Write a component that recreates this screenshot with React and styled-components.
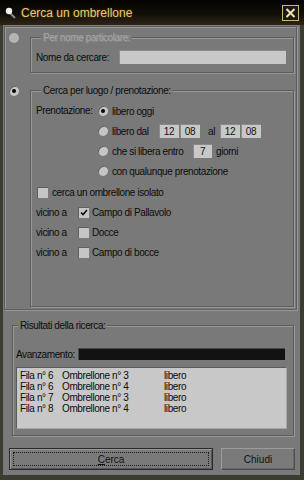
import styled, { createGlobalStyle } from "styled-components";

const GlobalStyle = createGlobalStyle`
  * { box-sizing: border-box; }
  html, body { margin: 0; padding: 0; background: #3c3d31; }
  body {
    font-family: "Liberation Sans", Arial, sans-serif;
    font-size: 10px;
    letter-spacing: -0.4px;
    color: #0c0c0c;
  }
`;

const Window = styled.div`
  width: 304px;
  height: 480px;
  display: flex;
  flex-direction: column;
  background: #3c3d31;
  overflow: hidden;
`;

const TitleBar = styled.div`
  height: 25px;
  display: flex;
  align-items: center;
  padding: 0 5px;
  background: linear-gradient(#050403 0%, #120e07 55%, #2e2616 100%);
`;

const Title = styled.span`
  flex: 1;
  margin-left: 5px;
  font-size: 12px;
  letter-spacing: 0;
  color: #e6c66c;
  text-shadow: 0 0 2px rgba(120, 90, 20, 0.8);
`;

const Body = styled.div`
  height: 450px;
  margin: 0 4px 0 3px;
  background: #797979;
  display: flex;
  flex-direction: column;
`;

const OptionsPanel = styled.div`
  margin: 1px 3px 0 1px;
  padding: 4px 2px 2px 0;
  border: 1px solid #5e5e5e;
  box-shadow: 1px 1px 0 #979797, inset 1px 1px 0 #979797;
`;

const Section = styled.div`
  display: flex;
  align-items: flex-start;
  margin-top: ${(p) => p.$gap || 0}px;
`;

const RadioColumn = styled.div`
  width: 25px;
  padding: 2px 0 0 4px;
`;

const Fieldset = styled.fieldset`
  flex: 1;
  margin: 0;
  min-width: 0;
  padding: 0 0 ${(p) => p.$bottom || 0}px ${(p) => p.$left || 5}px;
  border: 1px solid #5c5c5c;
  box-shadow: 1px 1px 0 #989898, inset 1px 1px 0 #989898;
`;

const ResultsGroup = styled(Fieldset)`
  flex: none;
  margin: 9px 6px 0 9px;
`;

const Legend = styled.legend`
  margin-left: ${(p) => p.$offset || 5}px;
  padding: 0 2px;
  line-height: 13px;
  background: #797979;
  color: ${(p) => (p.$disabled ? "#a6a6a6" : "inherit")};
  text-shadow: ${(p) => (p.$disabled ? "1px 1px 0 #8c8c8c" : "none")};
`;

const Radio = styled.span`
  position: relative;
  display: inline-block;
  flex: none;
  width: 10px;
  height: 10px;
  border-radius: 50%;
  background: ${(p) => (p.$disabled ? "#b4b4b4" : "#c6c6c6")};
  box-shadow: ${(p) => (p.$disabled ? "none" : "inset 1px 1px 0 #606060")};

  &::after {
    content: "";
    display: ${(p) => (p.$checked ? "block" : "none")};
    position: absolute;
    left: 3px;
    top: 3px;
    width: 4px;
    height: 4px;
    border-radius: 50%;
    background: #000;
  }
`;

const Checkbox = styled.span`
  display: inline-flex;
  align-items: center;
  justify-content: center;
  flex: none;
  width: 11px;
  height: 11px;
  margin-left: ${(p) => p.$ml || 0}px;
  background: #c6c6c6;
  box-shadow: inset 1px 1px 0 #606060;
`;

const Row = styled.div`
  display: flex;
  align-items: center;
  height: ${(p) => p.$h || 20}px;
  margin-top: ${(p) => p.$top || 0}px;
`;

const Label = styled.span`
  flex: none;
  width: ${(p) => (p.$w ? `${p.$w}px` : "auto")};
  margin-left: ${(p) => p.$ml || 0}px;
  white-space: nowrap;
`;

const TextBox = styled.span`
  display: inline-flex;
  align-items: center;
  justify-content: center;
  flex: none;
  width: ${(p) => p.$w}px;
  height: 14px;
  margin-right: ${(p) => p.$mr || 0}px;
  background: #c8c8c8;
  box-shadow: inset 1px 1px 0 #8a8a8a;
  color: #111;
`;

const BookingGrid = styled.div`
  display: grid;
  grid-template-columns: 62px 1fr;
  margin-top: 4px;
`;

const GridLabel = styled.span`
  line-height: 20px;
`;

const Progress = styled.div`
  width: 207px;
  height: 12px;
  background: #121212;
  box-shadow: inset 1px 1px 0 #4a4a4a;
`;

const ResultList = styled.div`
  width: 271px;
  height: 62px;
  margin-top: 7px;
  padding: 2px 3px;
  background: #c8c8c8;
  border: 1px solid;
  border-color: #5a5a5a #a6a6a6 #a6a6a6 #5a5a5a;
`;

const ResultRow = styled.div`
  display: grid;
  grid-template-columns: 42px 102px 1fr;
  height: 11px;
  line-height: 11px;
  white-space: nowrap;
`;

const ButtonRow = styled.div`
  display: flex;
  gap: 8px;
  margin: 12px 0 0 6px;
`;

const Button = styled.button`
  position: relative;
  width: ${(p) => p.$w}px;
  height: 22px;
  padding: 0;
  font: inherit;
  color: #111;
  background: #7a7a7a;
  cursor: pointer;
  border: 1px solid;
  border-color: ${(p) =>
    p.$default ? "#2a2a2a" : "#9c9c9c #4c4c4c #4c4c4c #9c9c9c"};
  box-shadow: ${(p) =>
    p.$default
      ? "inset 1px 1px 0 #9a9a9a, inset -1px -1px 0 #555"
      : "inset -1px -1px 0 #666"};

  &::before {
    content: "";
    display: ${(p) => (p.$default ? "block" : "none")};
    position: absolute;
    inset: 3px;
    border: 1px dotted #1a1a1a;
  }
`;

const results = [
  ["Fila n° 6", "Ombrellone n° 3", "libero"],
  ["Fila n° 6", "Ombrellone n° 4", "libero"],
  ["Fila n° 7", "Ombrellone n° 3", "libero"],
  ["Fila n° 8", "Ombrellone n° 4", "libero"],
];

const nearby = [
  ["Campo di Pallavolo", true],
  ["Docce", false],
  ["Campo di bocce", false],
];

function CheckMark() {
  return (
    <svg width="8" height="7" viewBox="0 0 8 7">
      <path d="M1 3.5 L3 5.5 L7 1" stroke="#000" strokeWidth="1.6" fill="none" />
    </svg>
  );
}

function TitleIcon() {
  return (
    <svg width="11" height="12" viewBox="0 0 11 12">
      <line x1="4" y1="5" x2="10" y2="11" stroke="#8a8a8a" strokeWidth="2" />
      <circle cx="4" cy="4" r="3.2" fill="#f2f2f2" />
    </svg>
  );
}

function CloseButton() {
  return (
    <svg width="17" height="16" viewBox="0 0 17 16">
      <rect x="0.5" y="0.5" width="16" height="15" fill="#1c1a14" stroke="#cdb676" />
      <path d="M4.5 4 L12.5 12 M12.5 4 L4.5 12" stroke="#efe3b8" strokeWidth="2" />
    </svg>
  );
}

export default function App() {
  return (
    <Window>
      <GlobalStyle />
      <TitleBar>
        <TitleIcon />
        <Title>Cerca un ombrellone</Title>
        <CloseButton />
      </TitleBar>
      <Body>
        <OptionsPanel>
          <Section>
            <RadioColumn>
              <Radio $disabled />
            </RadioColumn>
            <Fieldset $bottom={8}>
              <Legend $disabled>Per nome particolare:</Legend>
              <Row $h={14} $top={6}>
                <Label $w={83}>Nome da cercare:</Label>
                <TextBox $w={167} />
              </Row>
            </Fieldset>
          </Section>

          <Section $gap={11}>
            <RadioColumn>
              <Radio $checked />
            </RadioColumn>
            <Fieldset $bottom={44}>
              <Legend>Cerca per luogo / prenotazione:</Legend>
              <BookingGrid>
                <GridLabel>Prenotazione:</GridLabel>
                <div>
                  <Row>
                    <Radio $checked />
                    <Label $ml={4}>libero oggi</Label>
                  </Row>
                  <Row>
                    <Radio />
                    <Label $ml={4} $w={47}>libero dal</Label>
                    <TextBox $w={20} $mr={1}>12</TextBox>
                    <TextBox $w={20} $mr={8}>08</TextBox>
                    <Label $w={12}>al</Label>
                    <TextBox $w={20} $mr={1}>12</TextBox>
                    <TextBox $w={20}>08</TextBox>
                  </Row>
                  <Row>
                    <Radio />
                    <Label $ml={4} $w={81}>che si libera entro</Label>
                    <TextBox $w={19} $mr={4}>7</TextBox>
                    <Label>giorni</Label>
                  </Row>
                  <Row>
                    <Radio />
                    <Label $ml={4}>con qualunque prenotazione</Label>
                  </Row>
                </div>
              </BookingGrid>
              <Row $top={1}>
                <Checkbox $ml={1} />
                <Label $ml={4}>cerca un ombrellone isolato</Label>
              </Row>
              {nearby.map(([name, on]) => (
                <Row key={name}>
                  <Label $w={42}>vicino a</Label>
                  <Checkbox>{on && <CheckMark />}</Checkbox>
                  <Label $ml={3}>{name}</Label>
                </Row>
              ))}
            </Fieldset>
          </Section>
        </OptionsPanel>

        <ResultsGroup $left={3} $bottom={6}>
          <Legend $offset={2}>Risultati della ricerca:</Legend>
          <Row $h={12} $top={16}>
            <Label $w={62}>Avanzamento:</Label>
            <Progress />
          </Row>
          <ResultList>
            {results.map((r, i) => (
              <ResultRow key={i}>
                <span>{r[0]}</span>
                <span>{r[1]}</span>
                <span>{r[2]}</span>
              </ResultRow>
            ))}
          </ResultList>
        </ResultsGroup>

        <ButtonRow>
          <Button $w={204} $default>
            <u>C</u>erca
          </Button>
          <Button $w={74}>Chiudi</Button>
        </ButtonRow>
      </Body>
    </Window>
  );
}
